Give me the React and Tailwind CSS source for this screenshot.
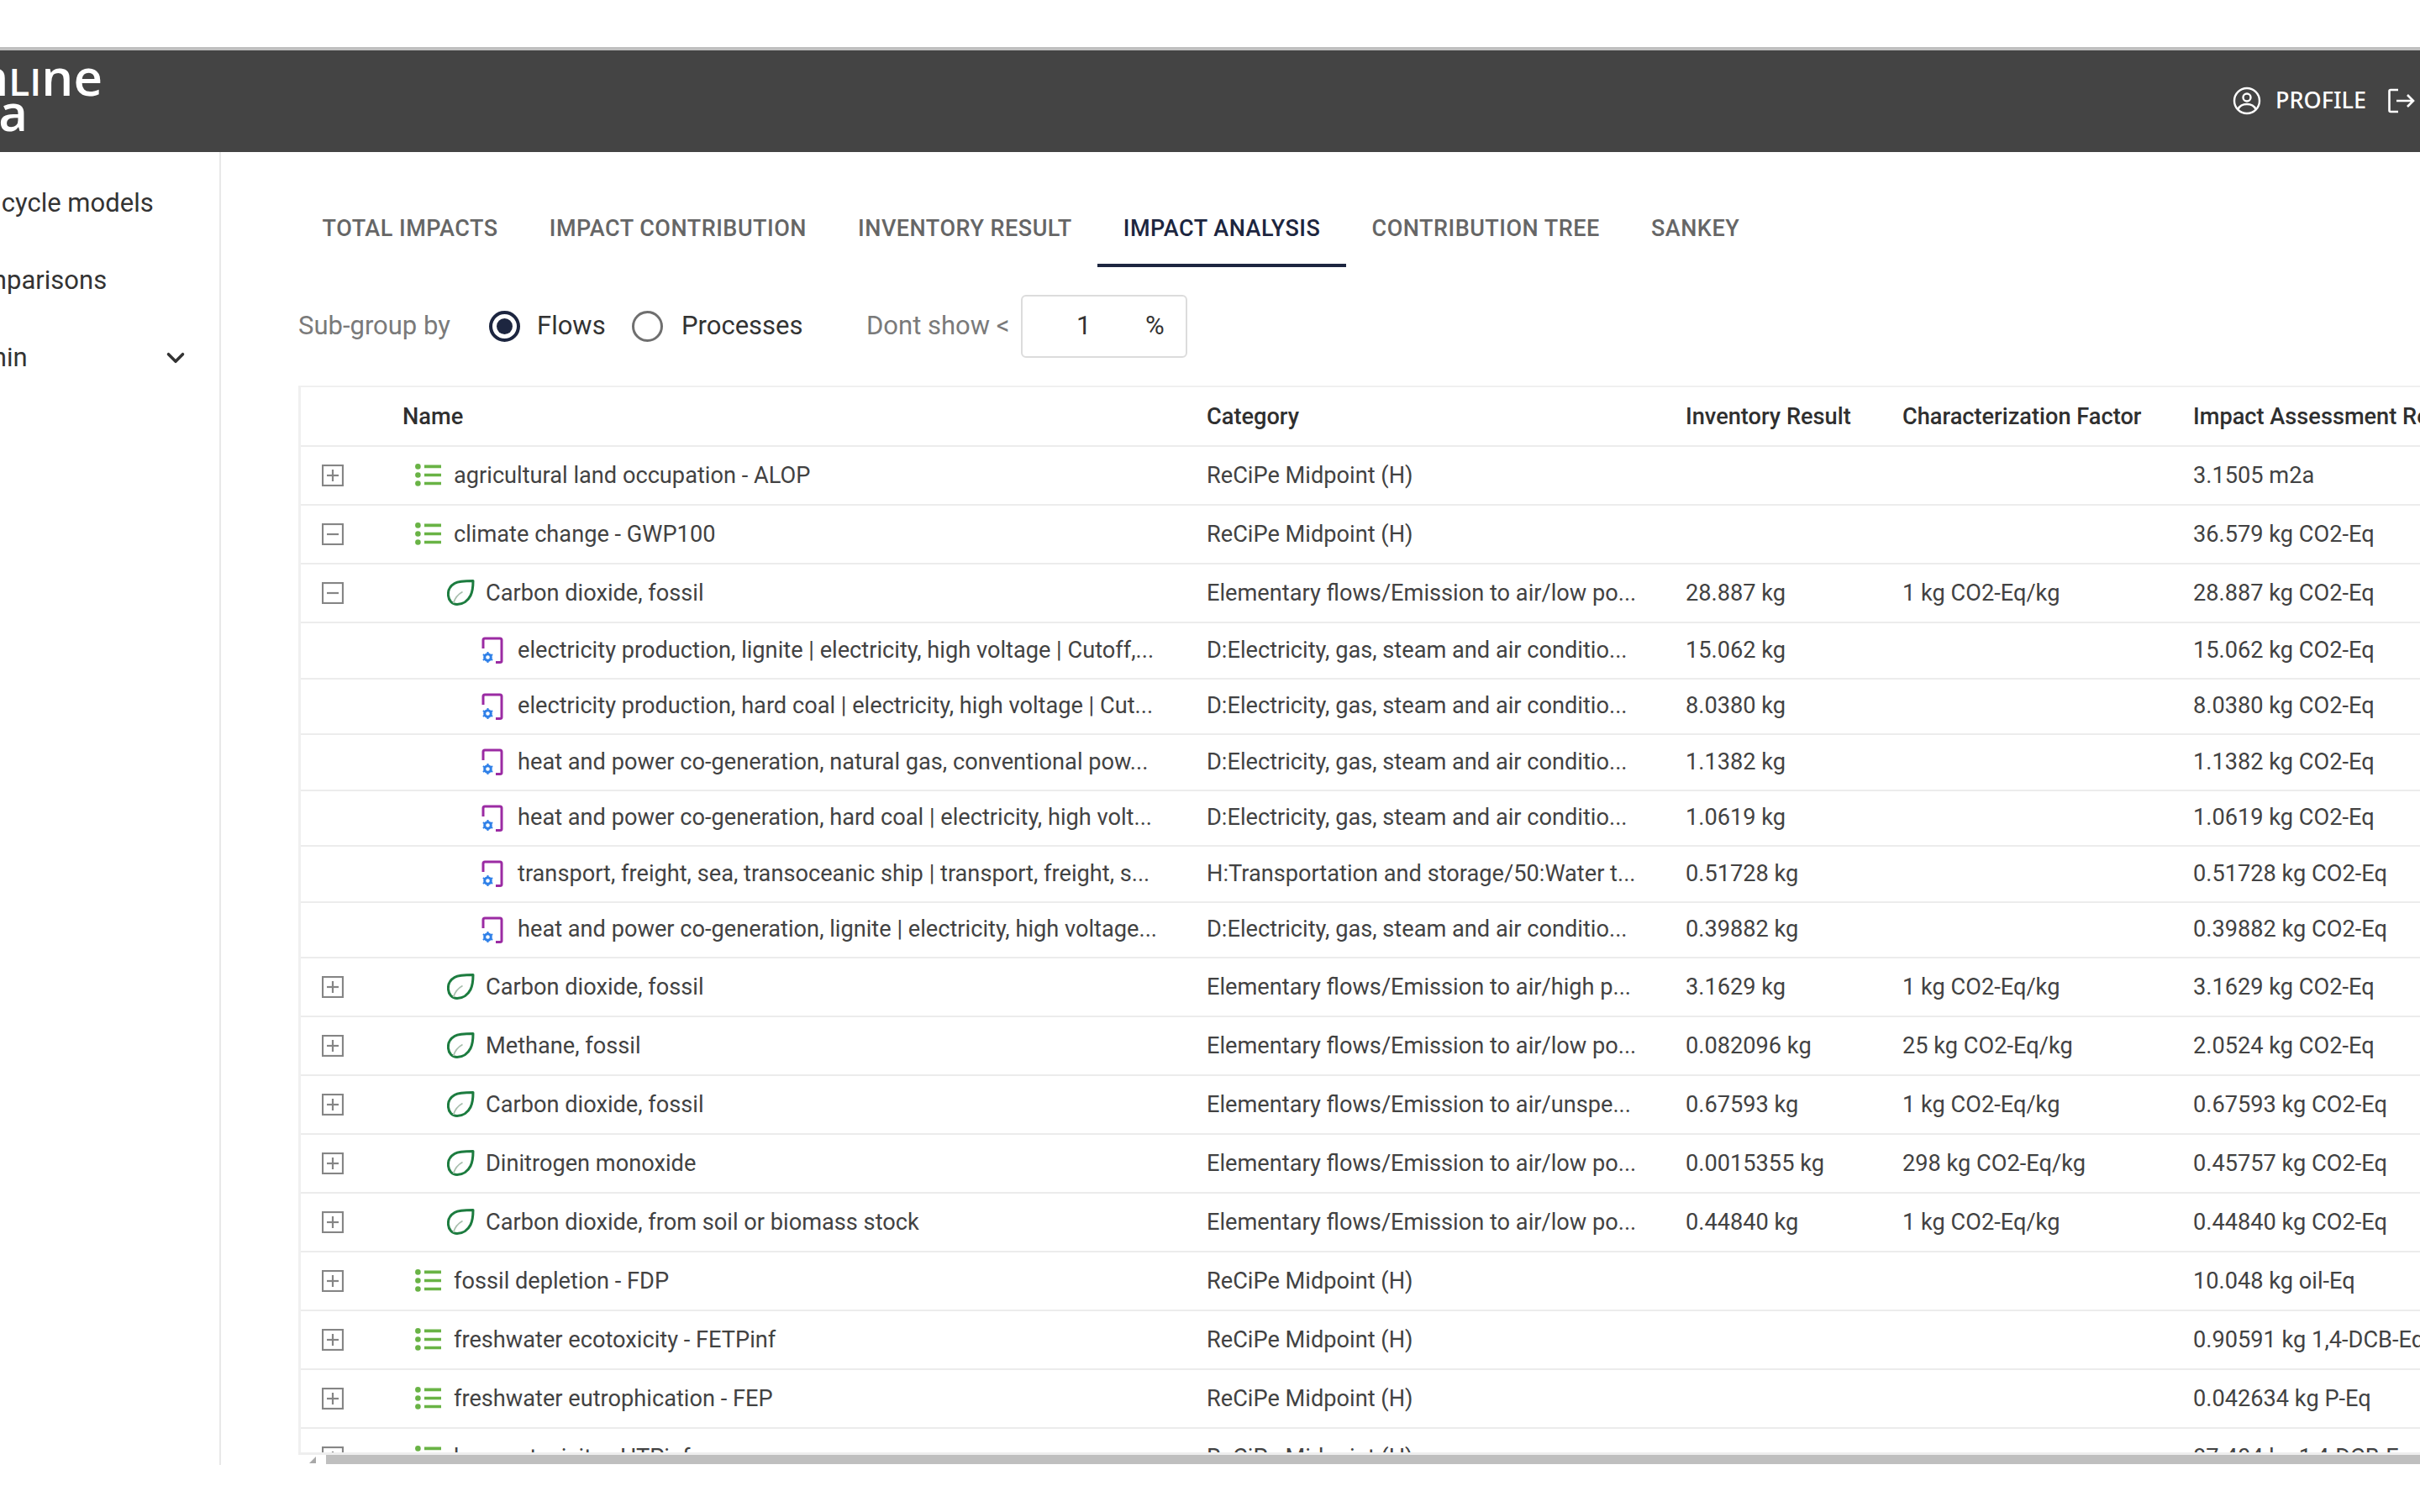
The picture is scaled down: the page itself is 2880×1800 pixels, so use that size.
import React from "react";
import { ChevronDown } from "lucide-react";

const tabs = [
  "TOTAL IMPACTS",
  "IMPACT CONTRIBUTION",
  "INVENTORY RESULT",
  "IMPACT ANALYSIS",
  "CONTRIBUTION TREE",
  "SANKEY",
];

const midpoint = "ReCiPe Midpoint (H)";
const power = "D:Electricity, gas, steam and air conditio...";
const lowPop = "Elementary flows/Emission to air/low po...";

const rows = [
  { type: "list", toggle: "plus", name: "agricultural land occupation - ALOP", cat: midpoint, impact: "3.1505 m2a" },
  { type: "list", toggle: "minus", name: "climate change - GWP100", cat: midpoint, impact: "36.579 kg CO2-Eq" },
  { type: "leaf", toggle: "minus", name: "Carbon dioxide, fossil", cat: lowPop, inv: "28.887 kg", factor: "1 kg CO2-Eq/kg", impact: "28.887 kg CO2-Eq" },
  { type: "proc", name: "electricity production, lignite | electricity, high voltage | Cutoff,...", cat: power, inv: "15.062 kg", impact: "15.062 kg CO2-Eq" },
  { type: "proc", name: "electricity production, hard coal | electricity, high voltage | Cut...", cat: power, inv: "8.0380 kg", impact: "8.0380 kg CO2-Eq" },
  { type: "proc", name: "heat and power co-generation, natural gas, conventional pow...", cat: power, inv: "1.1382 kg", impact: "1.1382 kg CO2-Eq" },
  { type: "proc", name: "heat and power co-generation, hard coal | electricity, high volt...", cat: power, inv: "1.0619 kg", impact: "1.0619 kg CO2-Eq" },
  { type: "proc", name: "transport, freight, sea, transoceanic ship | transport, freight, s...", cat: "H:Transportation and storage/50:Water t...", inv: "0.51728 kg", impact: "0.51728 kg CO2-Eq" },
  { type: "proc", name: "heat and power co-generation, lignite | electricity, high voltage...", cat: power, inv: "0.39882 kg", impact: "0.39882 kg CO2-Eq" },
  { type: "leaf", toggle: "plus", name: "Carbon dioxide, fossil", cat: "Elementary flows/Emission to air/high p...", inv: "3.1629 kg", factor: "1 kg CO2-Eq/kg", impact: "3.1629 kg CO2-Eq" },
  { type: "leaf", toggle: "plus", name: "Methane, fossil", cat: lowPop, inv: "0.082096 kg", factor: "25 kg CO2-Eq/kg", impact: "2.0524 kg CO2-Eq" },
  { type: "leaf", toggle: "plus", name: "Carbon dioxide, fossil", cat: "Elementary flows/Emission to air/unspe...", inv: "0.67593 kg", factor: "1 kg CO2-Eq/kg", impact: "0.67593 kg CO2-Eq" },
  { type: "leaf", toggle: "plus", name: "Dinitrogen monoxide", cat: lowPop, inv: "0.0015355 kg", factor: "298 kg CO2-Eq/kg", impact: "0.45757 kg CO2-Eq" },
  { type: "leaf", toggle: "plus", name: "Carbon dioxide, from soil or biomass stock", cat: lowPop, inv: "0.44840 kg", factor: "1 kg CO2-Eq/kg", impact: "0.44840 kg CO2-Eq" },
  { type: "list", toggle: "plus", name: "fossil depletion - FDP", cat: midpoint, impact: "10.048 kg oil-Eq" },
  { type: "list", toggle: "plus", name: "freshwater ecotoxicity - FETPinf", cat: midpoint, impact: "0.90591 kg 1,4-DCB-Eq" },
  { type: "list", toggle: "plus", name: "freshwater eutrophication - FEP", cat: midpoint, impact: "0.042634 kg P-Eq" },
  { type: "list", toggle: "plus", name: "human toxicity - HTPinf", cat: midpoint, impact: "87.404 kg 1,4-DCB-Eq" },
];

const ToggleIcon = ({ kind }) => (
  <svg width="26" height="26" viewBox="0 0 26 26" className="shrink-0">
    <rect x="1" y="1" width="24" height="24" fill="none" stroke="#858585" strokeWidth="2.200" />
    <path d="M6 13h14" stroke="#858585" strokeWidth="2.200" />
    {kind === "plus" && <path d="M13 6v14" stroke="#858585" strokeWidth="2.200" />}
  </svg>
);

const ListIcon = () => (
  <svg width="31" height="27" viewBox="0 0 31 27" className="shrink-0">
    <circle cx="3.400" cy="3.400" r="3.300" fill="#69b345" />
    <circle cx="3.400" cy="13.500" r="3.300" fill="#69b345" />
    <circle cx="3.400" cy="23.500" r="3.300" fill="#69b345" />
    <path d="M11 3.400h20M11 13.500h20M11 23.500h20" stroke="#69b345" strokeWidth="3.600" />
  </svg>
);

const LeafIcon = () => (
  <svg width="33" height="31" viewBox="0 0 33 31" fill="none" className="shrink-0">
    <path d="M31 1.500C22 1.500 14 1.500 9 4.500 3 8 1 14 1.500 19 2 25 6 29.500 12 29.500 19 29.500 25 25 28 19 30.500 14 31 7 31 1.500z" stroke="#1c7c3f" strokeWidth="3" strokeLinejoin="round" />
    <path d="M7.500 28c2-6 5.500-10.500 11-13.500" stroke="#a9bfae" strokeWidth="1.800" />
  </svg>
);

const ProcessIcon = () => (
  <svg width="26" height="32" viewBox="0 0 26 32" fill="none" className="shrink-0">
    <path d="M2 14V4q0-2 2-2h18q2 0 2 2v25q0 1.500-2 1.500h-5" stroke="#9b2ba3" strokeWidth="3" />
    <circle cx="7.500" cy="24.500" r="3.800" stroke="#2f80e8" strokeWidth="3" />
    <path d="M7.500 18v2.500M7.500 28.500V31M1.800 21.200l2.200 1.300M11 26.500l2.200 1.300M1.800 27.800l2.200-1.300M11 22.500l2.200-1.300" stroke="#2f80e8" strokeWidth="2" />
  </svg>
);

const Radio = ({ checked }) => (
  <span
    className={
      checked
        ? "flex h-[37px] w-[37px] items-center justify-center rounded-full border-4 border-[#1d2640]"
        : "flex h-[37px] w-[37px] items-center justify-center rounded-full border-[3px] border-[#6f6f6f]"
    }
  >
    {checked && <span className="h-[19px] w-[19px] rounded-full bg-[#1d2640]" />}
  </span>
);

const Row = ({ row }) => {
  const isProc = row.type === "proc";
  return (
    <div
      className={
        isProc
          ? "grid h-[66.5px] grid-cols-[1078px_570px_258px_346px_600px] items-center border-b-2 border-[#ececec]"
          : "grid h-[70px] grid-cols-[1078px_570px_258px_346px_600px] items-center border-b-2 border-[#ececec]"
      }
    >
      <div className="flex items-center">
        <div className="ml-[25px] w-[26px]">{row.toggle && <ToggleIcon kind={row.toggle} />}</div>
        {row.type === "list" && (
          <div className="ml-[85px] flex items-center gap-[15px]">
            <ListIcon />
            <span className="whitespace-nowrap">{row.name}</span>
          </div>
        )}
        {row.type === "leaf" && (
          <div className="ml-[123px] flex items-center gap-[13px]">
            <LeafIcon />
            <span className="whitespace-nowrap">{row.name}</span>
          </div>
        )}
        {isProc && (
          <div className="ml-[164px] flex items-center gap-[17px]">
            <ProcessIcon />
            <span className="whitespace-nowrap">{row.name}</span>
          </div>
        )}
      </div>
      <div className="whitespace-nowrap">{row.cat}</div>
      <div className="whitespace-nowrap">{row.inv}</div>
      <div className="whitespace-nowrap">{row.factor}</div>
      <div className="whitespace-nowrap">{row.impact}</div>
    </div>
  );
};

const App = () => {
  return (
    <div className="flex h-[1800px] w-[2880px] flex-col overflow-hidden bg-white font-[Roboto,sans-serif]">
      <div className="h-[56px] shrink-0" />

      <header className="flex h-[125px] shrink-0 items-center justify-between border-t-4 border-[#bfbfbf] bg-[#444444] pr-[6px] text-white">
        <div className="mt-[-20px] font-['Open_Sans',sans-serif] text-[60px] leading-[44px] font-semibold">
          <div className="flex h-[42px] w-[122px] items-baseline justify-end whitespace-nowrap">
            on<span className="text-[46px] leading-[42px]">LI</span>ne
          </div>
          <div className="flex h-[42px] w-[33px] justify-end whitespace-nowrap">data</div>
        </div>
        <div className="flex items-center pb-[2px]">
          <svg width="34" height="34" viewBox="0 0 34 34" fill="none" stroke="#fff" strokeWidth="2.400">
            <circle cx="17" cy="17" r="15" />
            <circle cx="17" cy="13" r="4.500" />
            <path d="M6.500 27c2-4.500 6-6 10.500-6s8.500 1.500 10.500 6" />
          </svg>
          <span className="ml-[17px] font-['Noto_Sans',sans-serif] text-[27px] font-medium">PROFILE</span>
          <svg width="32" height="30" viewBox="0 0 32 30" fill="none" stroke="#fff" strokeWidth="2.600" className="ml-[26px]">
            <path d="M12 2H3q-1.500 0-1.500 1.500v23Q1.500 28 3 28h9M10 15h20M23 8l7 7-7 7" />
          </svg>
        </div>
      </header>

      <div className="flex h-[1563px] shrink-0">
        <aside className="w-[263px] shrink-0 border-r-2 border-[#e8e8e8] text-[31px] text-[#333333]">
          <div className="ml-[-57px] flex flex-col">
            <div className="mt-[38px] h-[46px] leading-[46px] whitespace-nowrap">Life cycle models</div>
            <div className="mt-[46px] h-[46px] leading-[46px] whitespace-nowrap">Comparisons</div>
            <div className="mt-[46px] flex h-[46px] items-center leading-[46px] whitespace-nowrap">
              <span>Admin</span>
              <ChevronDown className="ml-auto mr-[35px] h-[34px] w-[34px]" strokeWidth={2.500} />
            </div>
          </div>
        </aside>

        <main className="min-w-0 flex-1 pl-[90px]">
          <nav className="mt-[42px] flex">
            {tabs.map((tab) => (
              <div
                key={tab}
                className={
                  tab === "IMPACT ANALYSIS"
                    ? "flex h-[95px] items-center border-b-4 border-[#1d2640] px-[30.6px] pt-[7px] text-[27px] font-medium tracking-[0.5px] whitespace-nowrap text-[#1d2640]"
                    : "flex h-[95px] items-center border-b-4 border-transparent px-[30.6px] pt-[7px] text-[27px] font-medium tracking-[0.5px] whitespace-nowrap text-[#666666]"
                }
              >
                {tab}
              </div>
            ))}
          </nav>

          <div className="mt-[33px] flex h-[75px] items-center pl-[2px] text-[31px]">
            <span className="w-[227px] text-[#7a7a7a]">Sub-group by</span>
            <Radio checked />
            <span className="ml-[20px] w-[113px] text-[#333333]">Flows</span>
            <Radio />
            <span className="ml-[22px] w-[220px] text-[#333333]">Processes</span>
            <span className="w-[184px] text-[#7a7a7a]">Dont show &lt;</span>
            <div className="flex h-[75px] w-[198px] items-center rounded-md border-2 border-[#dcdcdc]">
              <span className="ml-[64px] w-[82px] text-[#333333]">1</span>
              <span className="text-[#333333]">%</span>
            </div>
          </div>

          <div className="mt-[33px] ml-[2px] h-[1270px] w-[2852px] overflow-hidden border-t-2 border-l-[3px] border-[#f0f0f0] text-[27.2px] text-[#424242]">
            <div className="grid h-[71px] grid-cols-[1078px_570px_258px_346px_600px] items-center border-b-2 border-[#ececec] pt-[2px] font-medium text-[#2f2f2f]">
              <div className="pl-[121px]">Name</div>
              <div>Category</div>
              <div>Inventory Result</div>
              <div>Characterization Factor</div>
              <div className="whitespace-nowrap">Impact Assessment Result</div>
            </div>
            {rows.map((row, i) => (
              <Row key={i} row={row} />
            ))}
          </div>

          <div className="ml-[2px] h-[14px] border-t-[3px] border-[#eeeeee]">
            <div className="flex h-[11px]">
              <div className="flex w-[33px] items-end justify-center pb-[1px]">
                <svg width="8" height="8" viewBox="0 0 8 8">
                  <path d="M8 0v8H0z" fill="#a8a8a8" />
                </svg>
              </div>
              <div className="flex-1 bg-[#bfbfbf]" />
            </div>
          </div>
        </main>
      </div>
    </div>
  );
};

export default App;
